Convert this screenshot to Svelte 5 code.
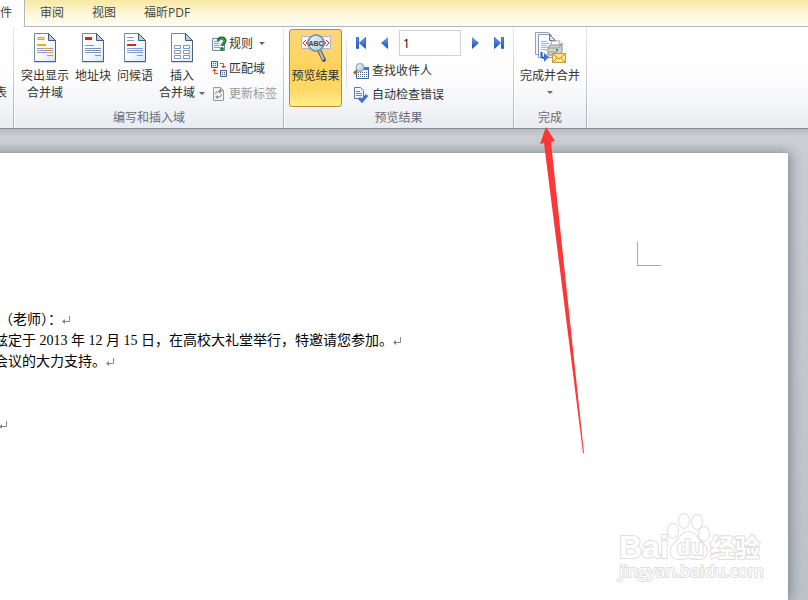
<script>
	const tabs = ['审阅', '视图', '福昕PDF'];

	const lines = [
		{ text: '（老师）：', indent: true },
		{ text: '兹定于 2013 年 12 月 15 日，在高校大礼堂举行，特邀请您参加。' },
		{ text: '会议的大力支持。' },
		{ text: '', hidden: true },
		{ text: '', hidden: true },
		{ text: '' }
	];

	let record = $state(1);
	let preview = $state(true);

	function go(step) {
		record = Math.max(1, Number(record) + step);
	}
</script>

{#snippet sheet(kind)}
	<svg class="big-icon" viewBox="0 0 32 32" aria-hidden="true">
		<path d="M6 3h14l7 8v20H6z" fill="#5b6470" opacity=".25" />
		<path d="M5.500 1.500h14l7 7v21h-21z" fill="url(#paper)" stroke="#7188a8" />
		<path d="M26.500 9v20.500h-21" fill="none" stroke="#4c6284" />
		<path d="M19.500 1.500v7h7z" fill="#b9cce6" stroke="#3f587c" />
		{#if kind === 'highlight'}
			<path d="M9 5.500h6v2H9z" fill="#ffe3a8" stroke="#ee9b20" />
			<path d="M8 12h9v2H8z" fill="#ffa31e" />
			<path d="M8 16.500h16M8 18.500h16M8 20.500h16M18 23.500h6" stroke="#879cce" />
			<path d="M14 16.500h6M8 18.500h3M18 20.500h6" stroke="#ffa31e" />
		{:else if kind === 'address'}
			<path d="M8 5h7v3H8z" fill="#d4280b" />
			<path d="M8 13.500h9M8 16.500h16M8 18.500h16M8 20.500h16M18 23.500h6" stroke="#7d95bd" />
		{:else if kind === 'greeting'}
			<path d="M8 5.500h7M8 8.500h7M8 16.500h16M8 18.500h16M8 20.500h16M18 23.500h6" stroke="#879cc8" />
			<path d="M8 12h9v2H8z" fill="#d4280b" />
		{:else}
			<path d="M8.500 13.500h6v3h-6zM17.500 13.500h6v3h-6zM8.500 18.500h6v3h-6zM17.500 18.500h6v3h-6zM8.500 23.500h6v3h-6zM17.500 23.500h6v3h-6z" fill="#fff" stroke="#8795b6" />
		{/if}
	</svg>
{/snippet}

{#snippet mark()}
	<svg class="mark" viewBox="0 0 8 8" aria-hidden="true">
		<path d="M7.500 0v5.500H2" fill="none" stroke="#888" />
		<path d="M0 5.500l3-2.500v5z" fill="#888" />
	</svg>
{/snippet}

<svg class="defs" aria-hidden="true">
	<defs>
		<linearGradient id="paper" x2="1" y2="1">
			<stop offset=".4" stop-color="#fff" />
			<stop offset="1" stop-color="#d9e5f5" />
		</linearGradient>
		<linearGradient id="blue" x2="0" y2="1">
			<stop stop-color="#6ba5f0" />
			<stop offset="1" stop-color="#1744bd" />
		</linearGradient>
		<linearGradient id="lens" x2="1" y2="1">
			<stop stop-color="#f4fbff" />
			<stop offset="1" stop-color="#a9c6dd" />
		</linearGradient>
	</defs>
</svg>

<div class="window">
	<nav class="tabs">
		<a class="tab active" href="#mailings">件</a>
		{#each tabs as tab}
			<a class="tab" href="#tab">{tab}</a>
		{/each}
	</nav>

	<div class="ribbon">
		<section class="group first">
			<span class="cut">表</span>
		</section>

		<section class="group">
			<div class="items">
				<button class="large">{@render sheet('highlight')}<span>突出显示<br />合并域</span></button>
				<button class="large">{@render sheet('address')}<span>地址块</span></button>
				<button class="large">{@render sheet('greeting')}<span>问候语</span></button>
				<button class="large">{@render sheet('field')}<span>插入<br />合并域<i class="caret"></i></span></button>
				<div class="stack">
					<button class="small">
						<svg class="icon" viewBox="0 0 16 16" aria-hidden="true">
							<path d="M1.500 2.500h9l3 3v9h-12z" fill="#f3f7fd" stroke="#7188a8" />
							<path d="M3 5.500h5M3 7.500h5M3 9.500h5M3 11.500h6" stroke="#8ca0bd" />
							<path d="M7.500 5q0-3 3-3 3.500 0 3.500 3 0 1.500-2 3-1 1-1 2" fill="none" stroke="#17692b" stroke-width="3" />
							<path d="M8 5q0-2.500 2.500-2.500 3 0 3 2.500 0 1.500-2 3-1 1-1 2" fill="none" stroke="#56bf52" />
							<circle cx="11" cy="13" r="2" fill="#23893a" />
						</svg>
						规则<i class="caret"></i>
					</button>
					<button class="small">
						<svg class="icon" viewBox="0 0 16 16" aria-hidden="true">
							<path d="M.500.500h6v6h-6zM9.500 9.500h6v6h-6z" fill="#e7effa" stroke="#3f5f91" />
							<path d="M2 2.500h1M4 2.500h1M2 4.500h1M4 4.500h1M11 11.500h1M13 11.500h1M11 13.500h1M13 13.500h1" stroke="#3f5f91" />
							<path d="M9 2.500h3.500v3M7 12.500H3.500v-3" fill="none" stroke="#e44b20" />
							<path d="M10 5h5l-2.500 2.500zM1 10h5L3.500 7.500z" fill="#e44b20" />
						</svg>
						匹配域
					</button>
					<button class="small" disabled>
						<svg class="icon" viewBox="0 0 16 16" aria-hidden="true">
							<path d="M2.500 1.500h7l3 3v10h-10z" fill="#f1f1f1" stroke="#999" />
							<path d="M9.500 1.500v3h3" fill="none" stroke="#999" />
							<path d="M4.500 8q0-2.500 3-2.500h1M10.500 8q0 3-3 3h-1" fill="none" stroke="#888" />
							<path d="M8 3.500l3 2-3 2zM7 9l-3 2 3 2z" fill="#888" />
						</svg>
						更新标签
					</button>
				</div>
			</div>
			<h2>编写和插入域</h2>
		</section>

		<section class="group">
			<div class="items">
				<button class="large toggle" aria-pressed={preview} class:on={preview} onclick={() => (preview = !preview)}>
					<svg class="big-icon" viewBox="0 0 32 32" aria-hidden="true">
						<path d="M1.500 4.500h29v12h-29z" fill="#f5f9ff" stroke="#a6b8cf" />
						<path d="M6 8l-3 3 3 3M9 8l-3 3 3 3M26 8l3 3-3 3M23 8l3 3-3 3" fill="none" stroke="#dc3522" />
						<path d="M19 18l5 10" stroke="#555e69" stroke-width="4" stroke-linecap="round" />
						<path d="M19.500 19l4 8.500" stroke="#b9c1c9" stroke-width="2" />
						<circle cx="16" cy="11" r="8" fill="url(#lens)" stroke="#8596a7" stroke-width="2" />
						<text x="16" y="14" text-anchor="middle" class="abc">ABC</text>
					</svg>
					<span>预览结果</span>
				</button>
				<div class="rule"></div>
				<div class="stack records">
					<div class="nav">
						<button aria-label="首记录" onclick={() => (record = 1)}>
							<svg class="icon" viewBox="0 0 16 16"><path d="M3.500 2.500h2v11h-2zM12.500 2.500v11L6.500 8z" fill="url(#blue)" stroke="#3569cf" /></svg>
						</button>
						<button aria-label="上一记录" onclick={() => go(-1)}>
							<svg class="icon" viewBox="0 0 16 16"><path d="M12 2v12L5 8z" fill="url(#blue)" /></svg>
						</button>
						<input aria-label="记录" bind:value={record} />
						<button aria-label="下一记录" onclick={() => go(1)}>
							<svg class="icon" viewBox="0 0 16 16"><path d="M4 2v12l7-6z" fill="url(#blue)" /></svg>
						</button>
						<button aria-label="尾记录">
							<svg class="icon" viewBox="0 0 16 16"><path d="M10.500 2.500h2v11h-2zM3.500 2.500v11l6-5.500z" fill="url(#blue)" stroke="#3569cf" /></svg>
						</button>
					</div>
					<button class="small">
						<svg class="icon" viewBox="0 0 16 16" aria-hidden="true">
							<path d="M3.500 4.500h12v11h-12z" fill="#fff" stroke="#47668f" />
							<path d="M9 4h7v3H9z" fill="#3e74d4" />
							<path d="M5 9.500h10M5 11.500h10M5 13.500h10" stroke="#4a6181" stroke-dasharray="1 1" />
							<path d="M4 8L1 10.500" stroke="#a86a25" stroke-width="3" />
							<circle cx="7" cy="4.500" r="4" fill="url(#lens)" stroke="#8795a4" />
						</svg>
						查找收件人
					</button>
					<button class="small">
						<svg class="icon" viewBox="0 0 16 16" aria-hidden="true">
							<path d="M1.500.500h6l3 3v8h-9z" fill="#f2f6fc" stroke="#607899" />
							<path d="M3 4.500h4M3 6.500h6M3 8.500h6" stroke="#7186a3" />
							<path d="M6 11l3 3 5-6" fill="none" stroke="#3d6fce" stroke-width="3" />
						</svg>
						自动检查错误
					</button>
				</div>
			</div>
			<h2>预览结果</h2>
		</section>

		<section class="group">
			<div class="items">
				<button class="large">
					<svg class="big-icon" viewBox="0 0 32 32" aria-hidden="true">
						<path d="M1.500.500h13l3 3v19h-16z" fill="#f2f6fc" stroke="#8da3bd" />
						<path d="M4.500 2.500h11l6 6v17h-17z" fill="url(#paper)" stroke="#8299b8" />
						<path d="M15.500 2.500v6h6z" fill="#dce8f7" stroke="#5b7697" />
						<path d="M7 9.500h6M7 11.500h8M7 13.500h6M7 15.500h6M7 17.500h6" stroke="#a3b7cf" />
						<path d="M18 9h8l-1 6h-9z" fill="#fff" stroke="#aaa" />
						<path d="M14 15l3-2h9l2-2v9l-3 3H14z" fill="#d3d4d5" stroke="#8c8c8c" />
						<path d="M14 16h11l3-4M15 20h9" fill="none" stroke="#999" />
						<path d="M22 18h2" stroke="#37a33e" stroke-width="2" />
						<path d="M7.500 20v4q0 2 3 2" fill="none" stroke="#285bc9" stroke-width="2" />
						<path d="M10 21l5 4-5 5z" fill="#3f72d8" />
						<path d="M18.500 21.500h13v9h-13z" fill="#ffe691" stroke="#c99b2c" />
						<path d="M19 22l6 5 6-5M19 30l4-4M31 30l-4-4" fill="none" stroke="#b58b29" />
					</svg>
					<span>完成并合并</span>
					<i class="caret below"></i>
				</button>
			</div>
			<h2>完成</h2>
		</section>
	</div>

	<main class="canvas">
		<article class="page">
			<div class="corner"></div>
			<div class="body">
				{#each lines as line}
					<p class:indent={line.indent}>{line.text}{#if !line.hidden}{@render mark()}{/if}</p>
				{/each}
			</div>
			<svg class="watermark" viewBox="0 0 150 76">
				<text x="3" y="48" class="logo">Bai</text>
				<g>
					<ellipse cx="57" cy="21" rx="5" ry="7" />
					<ellipse cx="68" cy="11" rx="5" ry="7" />
					<ellipse cx="81" cy="12" rx="5" ry="7" />
					<ellipse cx="88" cy="24" rx="5" ry="7" />
					<path d="M72 22c-7 0-8 7-13 11-6 5-6 16 4 16 4 0 5-1 9-1s6 1 11 1c9 0 10-10 4-15-5-4-7-12-15-12z" />
				</g>
				<text x="61" y="45" class="du">du</text>
				<text x="94" y="47" class="cn">经验</text>
				<text x="3" y="67" class="url">jingyan.baidu.com</text>
			</svg>
		</article>
	</main>

	<svg class="arrow" viewBox="0 0 46 328" aria-hidden="true">
		<path d="M7 1L1 18l4-1 39 310h1L12 16l4-1z" fill="#fb3838" />
	</svg>
</div>

<style>
	:global(body) {
		margin: 0;
		overflow: hidden;
	}

	.window {
		position: relative;
		display: flex;
		flex-direction: column;
		min-height: 100vh;
		overflow: hidden;
		font-family: "Open Sans", "Noto Sans CJK SC", sans-serif;
		font-size: 12px;
		line-height: 17px;
		color: #333;
	}

	.defs {
		position: absolute;
		width: 0;
		height: 0;
	}

	.tabs {
		display: flex;
		height: 26px;
		border-bottom: 1px solid #b4b6b9;
		background: linear-gradient(#f8e8a4, #fdf6d6 50%, #fffdf4);
	}

	.tab {
		padding: 4px 14px;
		color: #444;
		text-decoration: none;
		white-space: nowrap;
	}

	.tab.active {
		height: 19px;
		padding: 4px 12px 4px 0;
		margin-right: 1px;
		border-right: 1px solid #b4b6b9;
		border-bottom-right-radius: 2px;
		background: #fff;
	}

	.ribbon {
		display: flex;
		height: 101px;
		border-bottom: 1px solid #888c92;
		background: linear-gradient(#fff 0%, #fdfdfe 50%, #f4f5f8 75%, #e8ebef 100%);
	}

	.group {
		display: flex;
		flex-direction: column;
		justify-content: space-between;
		border-right: 1px solid;
		border-image: linear-gradient(#e8eaed, #acb1b8) 1;
		box-shadow: 1px 0 #fff;
	}

	.group.first {
		width: 13px;
		margin-right: 1px;
	}

	.cut {
		margin: 57px 0 0 -5px;
	}

	h2 {
		margin: 0 0 2px;
		font-size: 12px;
		font-weight: normal;
		line-height: 17px;
		text-align: center;
		color: #666c7a;
	}

	.items {
		display: flex;
		gap: 6px;
		padding: 0 6px;
	}

	button {
		padding: 0;
		border: 0;
		background: none;
		font: inherit;
		color: inherit;
		white-space: nowrap;
	}

	button:disabled {
		color: #999;
	}

	.large {
		display: flex;
		flex-direction: column;
		align-items: center;
		gap: 3px;
		padding-top: 5px;
	}

	.big-icon {
		display: block;
		width: 32px;
		height: 32px;
	}

	.toggle {
		box-sizing: border-box;
		width: 53px;
		height: 78px;
		margin: 2px 0 0 -1px;
		padding: 2px 0 0;
		border: 1px solid transparent;
		border-radius: 3px;
	}

	.toggle.on {
		border-color: #b98c2c;
		background: linear-gradient(#fbd77a, #ffd35c 50%, #ffd868 80%, #fff08c);
	}

	.abc {
		font: bold 7px "Liberation Sans", sans-serif;
		fill: #444;
	}

	.caret {
		display: inline-block;
		margin-left: 4px;
		border: 3px solid transparent;
		border-top-color: #666;
		border-bottom: 0;
		vertical-align: middle;
	}

	.caret.below {
		margin: 4px 0 0;
	}

	.stack {
		display: flex;
		flex-direction: column;
		gap: 8px;
		padding-top: 8px;
	}

	.small {
		display: flex;
		align-items: center;
		gap: 2px;
	}

	.icon {
		display: block;
		flex: none;
		width: 16px;
		height: 16px;
	}

	.rule {
		width: 1px;
		margin: 4px 0 8px -2px;
		background: linear-gradient(#fff, #c9ccd1 50%, #fff);
	}

	.records {
		gap: 7px;
		padding-top: 4px;
	}

	.records .small {
		gap: 3px;
	}

	.nav {
		display: flex;
		align-items: center;
		gap: 7px;
		height: 24px;
	}

	.nav input {
		box-sizing: border-box;
		width: 62px;
		height: 26px;
		padding: 0 3px;
		border: 1px solid #cdd1d8;
		font: inherit;
		color: #000;
	}

	.canvas {
		display: flex;
		flex: 1;
		padding: 24px 20px 0 0;
		background: linear-gradient(#b7babf, #cdd0d5 8px, #c9ccd1 24px, #bec2c7);
	}

	/* the left part of the sheet is scrolled out of view */
	.page {
		position: relative;
		display: flex;
		flex: 1;
		flex-direction: column;
		margin-left: -20px;
		padding: 89px 0 0 20px;
		background: #fff;
		box-shadow: 0 0 1px #8a96a4, 2px 0 12px #7e858e;
	}

	.corner {
		align-self: flex-end;
		width: 23px;
		height: 23px;
		margin-right: 127px;
		border: solid #aaa;
		border-width: 0 0 1px 1px;
	}

	.body {
		margin: 43px 0 0 -7px;
		font-family: "Liberation Serif", "Noto Sans CJK SC", serif;
		font-size: 14px;
		line-height: 21px;
		color: #000;
	}

	.body p {
		min-height: 21px;
		margin: 0;
		padding-left: 1px;
		white-space: nowrap;
	}

	.body .indent,
	.body p:last-child {
		padding-left: 6px;
	}

	.mark {
		width: 8px;
		height: 8px;
	}

	.watermark {
		position: absolute;
		right: 22px;
		bottom: 14px;
		width: 150px;
		height: 76px;
		fill: #fff;
		stroke: #dedede;
		stroke-width: 2px;
		paint-order: stroke;
	}

	.logo {
		font: bold 32px "Liberation Sans", sans-serif;
	}

	.du {
		font: bold 22px "Liberation Sans", sans-serif;
	}

	.cn {
		font: bold 25px "Noto Sans CJK SC", sans-serif;
	}

	.url {
		font: 17px "Open Sans", sans-serif;
	}

	.arrow {
		position: absolute;
		top: 126px;
		left: 539px;
		width: 46px;
		height: 328px;
	}
</style>
